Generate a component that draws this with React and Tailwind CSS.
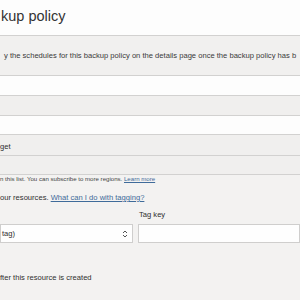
export default function App() {
  const font = { fontFamily: '"Liberation Sans", Arial, sans-serif' };
  return (
    <div className="w-[300px] h-[300px] overflow-hidden bg-[#f3f2f1] text-[#2f2f2f]" style={font}>
      <div className="h-[35px] bg-[#fdfdfd] pt-[9px] pl-[1px] text-[14.5px] leading-[15px] text-[#333]">
        kup policy
      </div>
      <div className="h-[41px] border-y border-[#d2d1d0] bg-[#f1f0ef] flex items-center pl-[4px] text-[7.6px] whitespace-nowrap text-[#3a3a3a] overflow-hidden">
        y the schedules for this backup policy on the details page once the backup policy has b
      </div>
      <div className="h-[20px] border-b border-[#d2d1d0] bg-[#fdfdfd]" />
      <div className="h-[20px] border-b border-[#d2d1d0] bg-[#f0efee]" />
      <div className="h-[19px] border-b border-[#d2d1d0] bg-[#fdfdfd]" />
      <div className="h-[21px] border-b border-[#d2d1d0] bg-[#f0efee] flex items-center pt-[3px] text-[7.6px]">
        get
      </div>
      <div className="h-[19px] border-b border-[#d2d1d0] bg-[#f0efee]" />
      <div className="text-[6.1px] leading-[8px] whitespace-nowrap text-[#444]">
        n this list. You can subscribe to more regions.{' '}
        <span className="text-[#3f6b9a] underline">Learn more</span>
      </div>
      <div className="pt-[10px] text-[7.6px] leading-[10px] whitespace-nowrap">
        our resources.{' '}
        <span className="text-[#3f6b9a] underline">What can I do with tagging?</span>
      </div>
      <div className="flex gap-[5px] pt-[3px]">
        <div className="w-[133px] flex flex-col">
          <div className="h-[18px]" />
          <div className="h-[19px] border border-[#cfcecd] bg-[#fefefe] flex items-center justify-between pl-[1px] pr-[4px] text-[7.6px]">
            <span>tag)</span>
            <svg width="6" height="10" viewBox="0 0 6 10" fill="none" stroke="#555" strokeWidth="1">
              <path d="M1 4 L3 2 L5 4" />
              <path d="M1 6 L3 8 L5 6" />
            </svg>
          </div>
        </div>
        <div className="flex-1 flex flex-col">
          <div className="h-[18px] flex items-center pl-[1px] text-[7.6px]">Tag key</div>
          <div className="h-[19px] border border-[#cfcecd] bg-[#fefefe]" />
        </div>
      </div>
      <div className="pt-[30px] text-[7.6px] leading-[10px] whitespace-nowrap">
        fter this resource is created
      </div>
    </div>
  );
}
